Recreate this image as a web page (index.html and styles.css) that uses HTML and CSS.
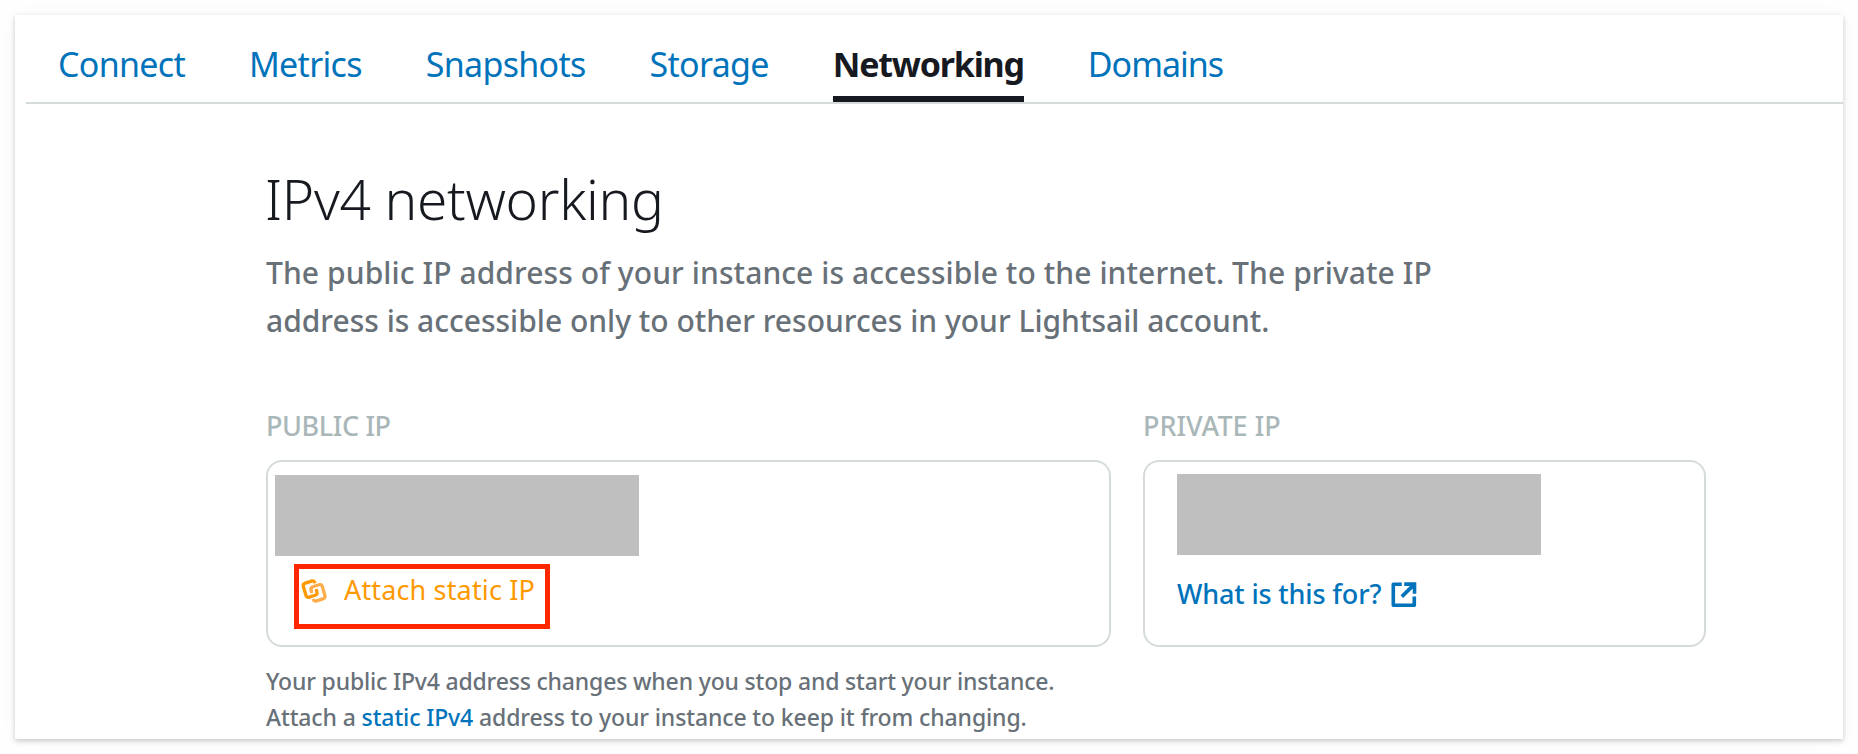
FILE: index.html
```html
<!DOCTYPE html>
<html lang="en">
<head>
    <meta charset="utf-8">
    <title>Networking</title>
    <link rel="stylesheet" href="styles.css">
</head>
<body>
    <div class="panel">
        <nav class="tabs">
            <a class="tab">Connect</a>
            <a class="tab">Metrics</a>
            <a class="tab">Snapshots</a>
            <a class="tab">Storage</a>
            <a class="tab active">Networking</a>
            <a class="tab">Domains</a>
        </nav>

        <div class="content">
            <h1>IPv4 networking</h1>
            <p class="intro"><span class="intro-lead">The public IP address of your instance is accessible to the internet. The private IP</span><br>address is accessible only to other resources in your Lightsail account.</p>

            <div class="ip-grid">
                <div>
                    <div class="label public-label">PUBLIC IP</div>
                    <div class="box public-box">
                        <div class="redacted"></div>
                        <div class="highlight">
                            <svg class="link-icon" width="26" height="26" viewBox="0 0 26 26" fill="none" stroke-width="3.3">
                                <path stroke="#ffac4d" d="M12.2 21Q12.9 23.8 15.6 22.9L21.9 20.9Q24.6 20 23.8 17.3L21.4 8.7Q20.6 5.9 17.9 6.8L11.9 8.7Q9.3 9.5 10.1 12.3L10.9 15"/>
                                <path stroke="#ff9900" d="M14 5.2Q13.2 2.2 10.5 3.1L4.3 5.1Q1.6 6 2.4 8.7L4.9 17.3Q5.7 20 8.4 19.1L14 17.3Q16.7 16.4 15.9 13.7L15.1 11"/>
                            </svg>
                            <span>Attach static IP</span>
                        </div>
                    </div>
                </div>
                <div>
                    <div class="label">PRIVATE IP</div>
                    <div class="box private-box">
                        <div class="redacted"></div>
                        <a class="help-link">
                            <span>What is this for?</span>
                            <svg width="26" height="26" viewBox="0 0 26 26" fill="none" stroke="#0073bb" stroke-width="3.6">
                                <path stroke-linejoin="round" d="M10.8 2.3H2.3V23.3H23.3V14.5"/>
                                <path d="M13.2 2.1H23.5V11.8M23 2.6L10.8 14.6"/>
                            </svg>
                        </a>
                    </div>
                </div>
            </div>

            <p class="note">Your public IPv4 address changes when you stop and start your instance.<br><span class="note-tip">Attach a <a>static IPv4</a> address to your instance to keep it from changing.</span></p>
        </div>
    </div>
</body>
</html>
```
FILE: styles.css
```css
body {
    margin: 0;
    padding: 15px;
    background: #fefefe;
    font-family: "Noto Sans", "Open Sans", sans-serif;
    color: #16191f;
}
.panel {
    box-sizing: border-box;
    width: 1828px;
    height: 724px;
    padding-top: 26px;
    background: #fff;
    box-shadow: 0 2px 5px rgba(0,0,0,0.2), 0 0 18px rgba(0,0,0,0.03);
}
.tabs {
    display: flex;
    gap: 64px;
    margin-left: 11px;
    padding-left: 32px;
    border-bottom: 2px solid #d5dbdb;
}
.tab {
    height: 55px;
    border-bottom: 6px solid transparent;
    font-size: 34px;
    line-height: 46px;
    letter-spacing: -0.7px;
    color: #0073bb;
}
.tab.active {
    border-bottom-color: #16191f;
    font-weight: 700;
    letter-spacing: -1.2px;
    color: #16191f;
}
.tab:last-child {
    letter-spacing: -1px;
}
.content {
    padding: 62px 0 0 251px;
}
h1 {
    margin: 0 0 17px -1px;
    font-size: 55px;
    font-weight: 300;
    line-height: 66px;
    letter-spacing: -0.3px;
}
p {
    margin: 0;
    font-weight: 500;
    color: #687078;
}
.intro {
    font-size: 30px;
    line-height: 48px;
}
.intro-lead {
    letter-spacing: 0.09px;
}
.ip-grid {
    display: grid;
    grid-template-columns: 845px 563px;
    column-gap: 32px;
    margin-top: 63px;
}
.label {
    margin-bottom: 16px;
    font-size: 27px;
    font-weight: 500;
    line-height: 36px;
    color: #aab7b8;
}
.public-label {
    letter-spacing: -0.4px;
}
.box {
    box-sizing: border-box;
    height: 187px;
    border: 2px solid #d5dbdb;
    border-radius: 16px;
}
.public-box {
    padding: 13px 0 0 7px;
}
.private-box {
    padding: 12px 0 0 32px;
}
.redacted {
    width: 364px;
    height: 81px;
    background: #bfbfbf;
}
.highlight {
    box-sizing: border-box;
    display: flex;
    align-items: flex-start;
    gap: 17px;
    width: 256px;
    height: 65px;
    margin: 8px 0 0 19px;
    padding: 2px 0 0 2px;
    border: 5px solid #ff2600;
    font-size: 27px;
    line-height: 38px;
    letter-spacing: 0.15px;
    white-space: nowrap;
    color: #ff9900;
}
.link-icon {
    margin-top: 7px;
}
.help-link {
    display: flex;
    gap: 10px;
    margin-top: 20px;
    font-size: 27px;
    font-weight: 500;
    line-height: 38px;
    letter-spacing: -0.15px;
    color: #0073bb;
}
.help-link svg {
    margin-top: 7px;
}
.note {
    margin-top: 16px;
    font-size: 23px;
    line-height: 36px;
    letter-spacing: -0.18px;
}
.note-tip {
    letter-spacing: -0.12px;
}
.note a {
    color: #0073bb;
}
```
